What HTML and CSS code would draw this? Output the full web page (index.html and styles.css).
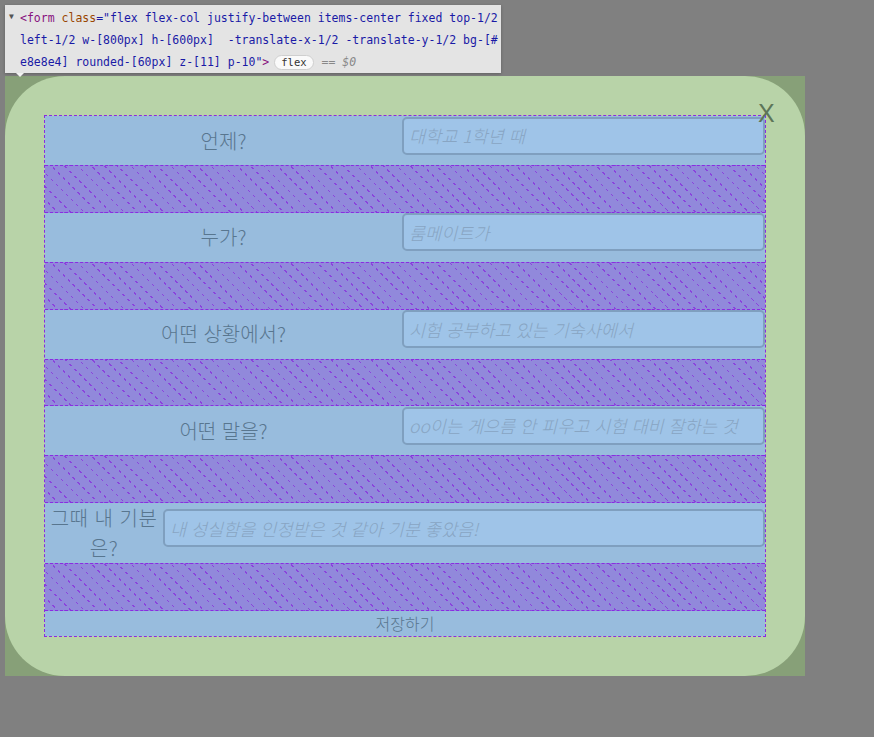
FILE: index.html
```html
<!DOCTYPE html>
<html lang="ko">
<head>
<meta charset="utf-8">
<title>form</title>
<link rel="stylesheet" href="styles.css">
</head>
<body>
<div class="tooltip">
  <span class="tw-marker">▼</span>
  <div class="tw-line"><span class="t-tag">&lt;form</span> <span class="t-attr">class</span><span class="t-val">="flex flex-col justify-between items-center fixed top-1/2</span></div>
  <div class="tw-line"><span class="t-val">left-1/2 w-[800px] h-[600px]  -translate-x-1/2 -translate-y-1/2 bg-[#</span></div>
  <div class="tw-line"><span class="t-val">e8e8e4] rounded-[60px] z-[11] p-10"</span><span class="t-tag">&gt;</span><span class="badge">flex</span><span class="t-eq">== <i>$0</i></span></div>
  <span class="tw-arrow"></span>
</div>

<div class="box">
  <form class="form">
    <span class="close">X</span>
    <div class="content">
      <div class="row">
        <label class="label">언제?</label>
        <input class="field" placeholder="대학교 1학년 때">
      </div>
      <div class="gap"></div>
      <div class="row">
        <label class="label">누가?</label>
        <input class="field" placeholder="룸메이트가">
      </div>
      <div class="gap"></div>
      <div class="row">
        <label class="label">어떤 상황에서?</label>
        <input class="field" placeholder="시험 공부하고 있는 기숙사에서">
      </div>
      <div class="gap"></div>
      <div class="row">
        <label class="label">어떤 말을?</label>
        <input class="field" placeholder="oo이는 게으름 안 피우고 시험 대비 잘하는 것">
      </div>
      <div class="gap"></div>
      <div class="row">
        <label class="label label-narrow">그때 내 기분은?</label>
        <input class="field field-wide" placeholder="내 성실함을 인정받은 것 같아 기분 좋았음!">
      </div>
      <div class="gap"></div>
      <div class="save">저장하기</div>
    </div>
  </form>
</div>
</body>
</html>
```

FILE: styles.css
```css
html, body {
  margin: 0;
  padding: 0;
}

body {
  background: #808080;
  width: 874px;
  height: 737px;
  overflow: hidden;
  position: relative;
  font-family: "Noto Sans CJK KR", "Noto Sans", sans-serif;
}

/* devtools tooltip */
.tooltip {
  position: absolute;
  left: 5px;
  top: 5px;
  width: 496px;
  height: 68px;
  padding: 2px 0 0 15px;
  box-sizing: border-box;
  background: #e4e4e4;
  box-shadow: 0 1px 3px rgba(0, 0, 0, 0.25);
  font-family: "DejaVu Sans Mono", "Liberation Mono", monospace;
  font-size: 11.5px;
  z-index: 5;
}

.tw-marker {
  position: absolute;
  left: 4px;
  top: 7px;
  font-size: 8px;
  line-height: 10px;
  color: #555;
}

.tw-line {
  height: 22px;
  line-height: 22px;
  white-space: pre;
}

.t-tag { color: #881280; }
.t-attr { color: #994500; }
.t-val { color: #1a1aa6; }

.badge {
  display: inline-block;
  vertical-align: middle;
  margin-left: 5px;
  height: 15px;
  line-height: 13px;
  padding: 0 6px;
  border: 1px solid #cfcfcf;
  border-radius: 8px;
  background: #fafafa;
  color: #333;
  font-size: 10.5px;
  box-sizing: border-box;
}

.t-eq {
  margin-left: 8px;
  color: #888;
}

.tw-arrow {
  position: absolute;
  left: 11px;
  bottom: -4px;
  width: 0;
  height: 0;
  border-left: 4px solid transparent;
  border-right: 4px solid transparent;
  border-top: 4px solid #f2f2f2;
}

/* form box */
.box {
  position: absolute;
  left: 5px;
  top: 76px;
  width: 800px;
  height: 600px;
  background: #87a078;
}

.form {
  margin: 0;
  position: relative;
  width: 800px;
  height: 600px;
  box-sizing: border-box;
  padding: 40px;
  border-radius: 60px;
  background: #b8d3a8;
}

.close {
  position: absolute;
  left: 753px;
  top: 22px;
  font-family: "Liberation Sans", sans-serif;
  font-size: 25px;
  line-height: 30px;
  color: #5d7558;
  z-index: 2;
}

.content {
  height: 520px;
  display: flex;
  flex-direction: column;
  justify-content: space-between;
  background: #98bcdd;
  outline: 1px dashed #8a2be2;
}

.row {
  display: flex;
  align-items: center;
  min-height: 49px;
}

.label {
  flex: 1;
  text-align: center;
  font-size: 20px;
  font-weight: 300;
  line-height: 30px;
  color: #58768f;
}

.label-narrow {
  letter-spacing: 0.5px;
}

.field {
  width: 363px;
  height: 38px;
  margin: 0 0 10px 0;
  box-sizing: border-box;
  border: 2px solid #7f9fbf;
  border-radius: 5px;
  background: #9fc4e8;
  padding: 0 5px;
  font-family: "Noto Sans CJK KR", "Noto Sans", sans-serif;
  font-size: 17.5px;
  font-weight: 300;
  color: #58768f;
  outline: none;
}

.field::placeholder {
  font-style: italic;
  color: #88a5c3;
}

.field-wide {
  width: 602px;
}

.gap {
  flex: 1;
  box-sizing: border-box;
  border-top: 1px dashed #8a2be2;
  border-bottom: 1px dashed #8a2be2;
  background-color: #9189db;
  background-image:
    repeating-linear-gradient(-45deg, transparent 0 3px, #9189db 3px 7px),
    repeating-linear-gradient(45deg, transparent 0 8.2px, #8a44dc 8.2px 9.4px);
}

.save {
  height: 25px;
  line-height: 24px;
  text-align: center;
  font-size: 16px;
  font-weight: 300;
  color: #58768f;
}
```
